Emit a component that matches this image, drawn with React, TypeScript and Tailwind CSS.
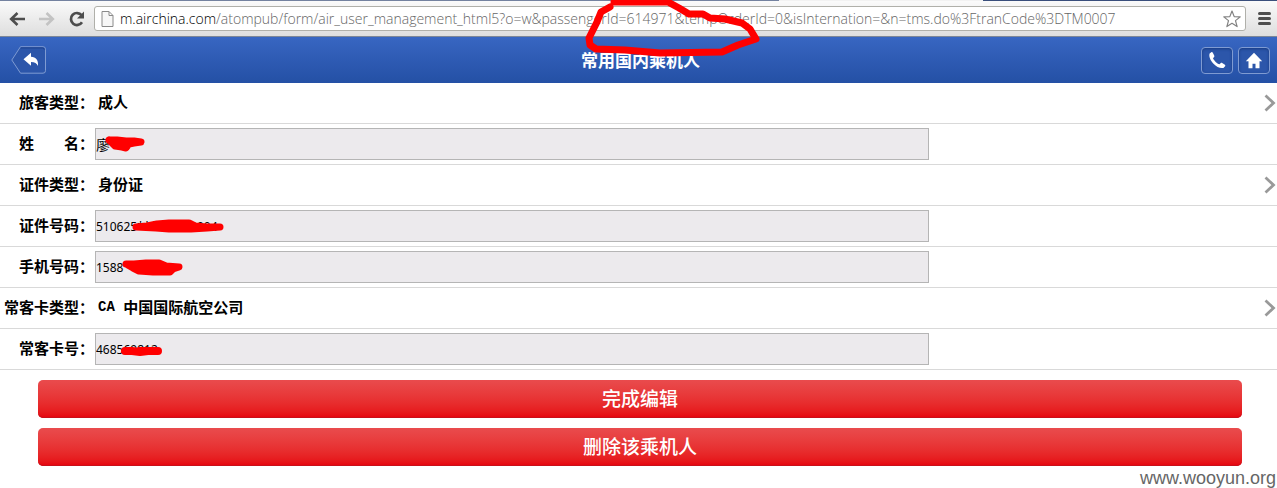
import React from "react";

type ScribbleShape = { left: string; width: number; height: number; points: string; stroke: number };

const scribbles: Record<string, ScribbleShape> = {
  name: {
    left: "left-[9px]",
    width: 44,
    height: 32,
    stroke: 7,
    points: "5,12 13,12 22,13 30,13 37,14 30,15 25,16 22,20 18,19 11,18 5,12 12,15 20,16",
  },
  idNumber: {
    left: "left-[36px]",
    width: 96,
    height: 32,
    stroke: 7,
    points: "5,17 16,16 26,14 38,13 58,13 64,16 76,17 89,17 76,18 60,19 38,19 25,18 5,17 38,16 62,16",
  },
  mobile: {
    left: "left-[26px]",
    width: 66,
    height: 32,
    stroke: 7,
    points: "5,13 13,13 25,12 38,12 45,15 58,16 52,18 49,21 32,21 18,20 12,17 5,13 20,15 32,18 44,19",
  },
  card: {
    left: "left-[25px]",
    width: 46,
    height: 32,
    stroke: 8,
    points: "5,18 12,18 20,19 28,18 38,18 20,18",
  },
};

function Scribble({ shape }: { shape: ScribbleShape }) {
  return (
    <svg
      className={`pointer-events-none absolute top-0 ${shape.left}`}
      width={shape.width}
      height={shape.height}
      fill="none"
      stroke="#ff0000"
      strokeWidth={shape.stroke}
      strokeLinecap="round"
      strokeLinejoin="round"
      aria-hidden="true"
    >
      <polyline points={shape.points} />
    </svg>
  );
}

function BrowserBar() {
  return (
    <div className="border-b border-[#7d8797] bg-linear-to-b from-[#fbfbfb] to-[#dedede]">
      <div className="flex h-px">
        <div className="w-[61%] bg-[#7482a0]" />
        <div className="w-[16%] bg-[#f2f2f2]" />
        <div className="grow bg-[#3a4f7c]" />
      </div>
      <div className="flex h-[35px] items-center pr-1.5 pl-2">
        <button aria-label="后退" className="mr-3 h-[18px] w-[18px]">
          <svg width="18" height="18" viewBox="0 0 18 18" fill="none" stroke="#4d4d4d" strokeWidth="2.6">
            <path d="M17 9H4M9.5 3L3.2 9l6.3 6" />
          </svg>
        </button>
        <button aria-label="前进" className="mr-3 h-[18px] w-[18px]">
          <svg width="18" height="18" viewBox="0 0 18 18" fill="none" stroke="#c3c3c3" strokeWidth="2.6">
            <path d="M1 9h13M8.500 3l6.300 6-6.300 6" />
          </svg>
        </button>
        <button aria-label="重新加载" className="mr-2 h-[18px] w-[18px]">
          <svg width="18" height="18" viewBox="0 0 18 18">
            <path d="M13.600 5.200A6 6 0 1 0 14 12.300" fill="none" stroke="#4d4d4d" strokeWidth="2.7" />
            <path d="M16 1.500V8.500H9z" fill="#4d4d4d" />
          </svg>
        </button>
        <div className="flex h-[25px] min-w-0 grow items-center rounded-[3px] border border-[#b0b0aa] bg-white pr-1 pl-1.5">
          <svg className="mr-1.5 shrink-0" width="13" height="16" viewBox="0 0 13 16" fill="#f7f7f7" stroke="#8a8a8a">
            <path d="M1 .5h7l4 4v11H1zM8 .5v4h4" />
          </svg>
          <div className="min-w-0 grow overflow-hidden font-['Open_Sans','Noto_Sans',sans-serif] text-[14px] leading-[20px] font-light whitespace-nowrap text-[#666]">
            <span className="text-black">m.airchina.com</span>
            /atompub/form/air_user_management_html5?o=w&amp;passengerId=614971&amp;tempOrderId=0&amp;isInternation=&amp;n=tms.do%3FtranCode%3DTM0007
          </div>
          <button aria-label="收藏" className="shrink-0">
            <svg width="18" height="18" viewBox="0 0 18 18" fill="#fff" stroke="#828282" strokeWidth="1.200" strokeLinejoin="round">
              <path d="M9 1l2.200 5.600 6 .3-4.700 3.700 1.600 6L9 13.300l-5.100 3.300 1.600-6L.8 6.900l6-.3z" />
            </svg>
          </button>
        </div>
        <button aria-label="菜单" className="ml-3 flex w-[13px] flex-col gap-0.5">
          <span className="h-[3px] rounded-full bg-[#4d4d4d]" />
          <span className="h-[3px] rounded-full bg-[#4d4d4d]" />
          <span className="h-[3px] rounded-full bg-[#4d4d4d]" />
        </button>
      </div>
    </div>
  );
}

function SquareButton({ label, children }: { label: string; children: React.ReactNode }) {
  return (
    <button
      aria-label={label}
      className="flex h-[27px] w-8 items-center justify-center rounded-[4px] border border-[#7f9bd2] bg-[#2c56aa] shadow-[inset_0_1px_3px_#173a80]"
    >
      {children}
    </button>
  );
}

function TitleBar() {
  return (
    <header className="grid h-[46px] grid-cols-[1fr_auto_1fr] items-center bg-linear-to-b from-[#3866c2] to-[#2450a5] pr-[7px] pl-[11px]">
      <button aria-label="返回" className="h-7 w-9">
        <svg width="36" height="28" viewBox="0 0 36 28">
          <path d="M9.500 .7H32q2.500 0 2.500 2.500v21.500q0 2.500-2.500 2.500H9.500L.8 14z" fill="#2c56aa" stroke="#7f9bd2" />
          <path d="M9.800 1.900H31.500q1.700 0 1.700 1.600" fill="none" stroke="#1c408a" />
          <path d="M12.500 13.200l7.500-6.500v4c5 .2 7.500 3.300 7 9.300-1.200-2.800-3.200-4-7-4v3.700z" fill="#fff" />
        </svg>
      </button>
      <h1 className="font-['Noto_Sans_CJK_SC',sans-serif] text-[17px] leading-6 font-bold text-white">常用国内乘机人</h1>
      <div className="flex justify-end gap-[5px]">
        <SquareButton label="电话">
          <svg width="18" height="18" viewBox="0 0 18 18" fill="#fff">
            <path d="M3.300 1.200L1.600 2.400C.6 5.500 2.500 9.500 5.500 12.700c3 3.100 6.800 5 9.900 4.200l1.700-1.700c.4-.5.300-1-.2-1.400l-2.700-1.900c-.5-.3-1-.3-1.400.1l-1.300 1.200C9 12.600 6 9.500 5 7.200l1.100-1.300c.4-.4.4-.9.1-1.400L4.700 1.600c-.3-.5-.9-.7-1.400-.4z" />
          </svg>
        </SquareButton>
        <SquareButton label="首页">
          <svg width="18" height="17" viewBox="0 0 18 17" fill="#fff">
            <path d="M9 .7L.8 9.200h2.700V16.200h4v-4.500h3v4.500h4V9.200h2.700z" />
          </svg>
        </SquareButton>
      </div>
    </header>
  );
}

const rowClass = "flex h-[41px] w-full items-center border-b border-[#d9d9d9] text-left";
const labelClass = "w-[95px] shrink-0 pr-px pb-0.5 text-right text-[15px] leading-5 font-bold whitespace-pre";

function SelectRow({ label, children }: { label: string; children: React.ReactNode }) {
  return (
    <button type="button" className={rowClass}>
      <span className={labelClass}>{label}</span>
      <span className="flex grow pb-0.5 pl-[3px] text-[15px] leading-5 font-bold">{children}</span>
      <svg className="mr-px shrink-0" width="12" height="18" viewBox="0 0 12 18" fill="none" stroke="#999" strokeWidth="2.800">
        <path d="M1.500 1.500L9.500 9l-8 7.500" />
      </svg>
    </button>
  );
}

function InputRow({ id, label, value }: { id: string; label: string; value: string }) {
  return (
    <div className={rowClass}>
      <label htmlFor={id} className={labelClass}>
        {label}
      </label>
      <div className="relative w-[65.3%]">
        <input
          id={id}
          defaultValue={value}
          className={`block h-8 w-full border border-[#b5b5b5] bg-[#eceaed] font-['Noto_Sans','Noto_Sans_CJK_SC',sans-serif] text-black ${
            id === "name" ? "text-[14px]" : "text-[12px]"
          }`}
        />
        <Scribble shape={scribbles[id]} />
      </div>
    </div>
  );
}

function ActionButton({ type, children }: { type: "submit" | "button"; children: React.ReactNode }) {
  return (
    <button
      type={type}
      className="h-[38px] w-full rounded-[5px] bg-linear-to-b from-[#e94b4d] to-[#e6000c] pb-0.5 text-[19px] leading-6 font-medium text-white shadow-[inset_0_-1px_0_#c8101a]"
    >
      {children}
    </button>
  );
}

export default function App() {
  return (
    <div className="relative bg-white font-['Noto_Sans_CJK_SC',sans-serif] text-black">
      <BrowserBar />
      <TitleBar />
      <svg
        className="pointer-events-none absolute top-0 left-1/2 -ml-[59px]"
        width="190"
        height="62"
        viewBox="580 0 190 62"
        fill="none"
        stroke="#ff0000"
        strokeWidth="7"
        strokeLinecap="round"
        strokeLinejoin="round"
        aria-hidden="true"
      >
        <path d="M610 7L601 12 597 22 589 38 590 45 596 49 625 50 660 53 722 52 738 45 756 39 750 29 742 23 725 19 710 18 703 14 689 14 679 8 668 2 614 2" />
      </svg>
      <form onSubmit={(e) => e.preventDefault()}>
        <SelectRow label="旅客类型：">成人</SelectRow>
        <InputRow id="name" label="姓　　名：" value="廖" />
        <SelectRow label="证件类型：">身份证</SelectRow>
        <InputRow id="idNumber" label="证件号码：" value="510625********0004" />
        <InputRow id="mobile" label="手机号码：" value="1588" />
        <SelectRow label="常客卡类型：">
          <span className="font-['Liberation_Mono',monospace] text-[14px] whitespace-pre">CA </span>
          中国国际航空公司
        </SelectRow>
        <InputRow id="card" label="常客卡号：" value="468569812" />
        <div className="flex flex-col gap-2.5 pt-2.5 pr-[35px] pl-[38px]">
          <ActionButton type="submit">完成编辑</ActionButton>
          <ActionButton type="button">删除该乘机人</ActionButton>
        </div>
      </form>
      <p className="pt-0.5 pr-px text-right font-['Liberation_Sans',sans-serif] text-[18px] leading-5 text-[#666]">www.wooyun.org</p>
    </div>
  );
}
